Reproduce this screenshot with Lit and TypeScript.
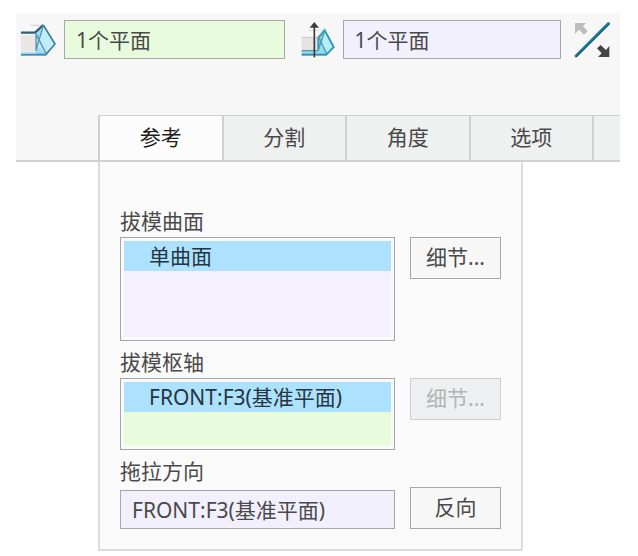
import { LitElement, html, css, svg } from "lit";
import { customElement, state } from "lit/decorators.js";

const surfaceIcon = svg`
  <svg class="icon" width="35" height="32" viewBox="63 75 105 96" aria-hidden="true">
    <path d="M90 79H130L105 101Z" fill="#fafafa" />
    <path d="M90 79H130" stroke="#cfd3d5" stroke-width="3" />
    <path d="M63 108H106V156H63Z" fill="#e9e6e4" />
    <path d="M63 158H106L112 163H63Z" fill="#b5e2f3" />
    <path d="M130 78L165 135L138 166H108V101Z" fill="#a0dcf5" />
    <path d="M130 78L110 138L138 166L165 135Z" fill="#c0ecfb" />
    <path d="M63 101H105L130 78" fill="none" stroke="#2d6079" stroke-width="7" />
    <path d="M130 78L165 135L138 166" fill="none" stroke="#3f7f9b" stroke-width="5" />
    <path d="M108 103V157M130 80L109 150M109 106L138 164" fill="none" stroke="#5b93aa" stroke-width="4" />
    <path d="M63 167H139" stroke="#3b8db0" stroke-width="6" />
  </svg>`;

const hingeIcon = svg`
  <svg class="icon" width="37" height="37" viewBox="81 66 111 111" aria-hidden="true">
    <path d="M112 94H160" stroke="#d8dadb" stroke-width="3" />
    <path d="M92 114H142V154H92Z" fill="#e6e2e0" />
    <path d="M92 115H140" stroke="#c9cccd" stroke-width="3" />
    <path d="M92 155H140L160 166H92Z" fill="#98d9ec" />
    <path d="M161 94L188 144L167 167H142V116Z" fill="#8fdcf0" />
    <path d="M161 94L152 138L167 164L187 144Z" fill="#b5effb" />
    <path d="M142 154V116L161 94L188 144L167 166" fill="none" stroke="#389bb6" stroke-width="6" />
    <path d="M161 96L142 152M145 118L167 164" fill="none" stroke="#5399ad" stroke-width="4" />
    <path d="M92 155H142" stroke="#4c9db5" stroke-width="4" />
    <path d="M92 167H168" stroke="#3c8eaa" stroke-width="6" />
    <path d="M130 80V175" stroke="#3b3b3b" stroke-width="5" />
    <path d="M130 69L144 86H116Z" fill="#3b3b3b" />
  </svg>`;

const flipIcon = svg`
  <svg class="icon" width="36" height="37" viewBox="192 66 108 111" aria-hidden="true">
    <path d="M195 72H228L219 81L233 96L222 107L207 92L195 105Z" fill="#bdbdbd" />
    <path d="M298 174H264L275 163L261 148L272 138L288 153L298 141Z" fill="#454545" />
    <path d="M198 171L295 74" stroke="#2387a6" stroke-width="9" stroke-linecap="round" />
    <path d="M200 172L297 75" stroke="#27566b" stroke-width="4" stroke-linecap="round" />
  </svg>`;

@customElement("app-root")
export class AppRoot extends LitElement {
  @state() private activeTab = "参考";

  private readonly tabs = ["参考", "分割", "角度", "选项"];

  static styles = css`
    :host {
      display: block;
      padding: 13px 18px 5px 16px;
      background: #fff;
      color: #4a4a4a;
      font: 21px/32px "Noto Sans", "Noto Sans CJK SC", sans-serif;
    }
    * {
      box-sizing: border-box;
    }
    button,
    input {
      margin: 0;
      font: inherit;
      color: inherit;
      border-radius: 0;
    }
    .head {
      background: #f7f7f7;
    }
    .toolbar {
      display: flex;
      align-items: center;
      gap: 13px;
      height: 102px;
      padding: 7px 10px 56px 5px;
    }
    .icon {
      display: block;
      flex: none;
    }
    .collector {
      display: flex;
      flex: 1;
      align-items: center;
      gap: 8px;
      min-width: 0;
    }
    .field {
      width: 100%;
      min-width: 0;
      height: 39px;
      padding: 0 11px 2px;
      border: 1px solid #a6a6a6;
      background: #f3f0fe;
      outline: none;
    }
    .active {
      background: #e8fcdd;
    }
    .flip {
      flex: none;
      padding: 0;
      border: 0;
      background: none;
    }
    .tabs {
      display: grid;
      grid-template-columns: 82px repeat(4, 1fr) 28px;
      height: 47px;
      border-bottom: 2px solid #d0d0d0;
    }
    .tab {
      padding: 0 0 2px;
      border: 0 solid #d0d0d0;
      border-width: 1px 0 0 2px;
      background: #eff0f0;
    }
    .tab[aria-selected="true"] {
      background: #fcfcfc;
      color: #1c1c1c;
    }
    .first {
      grid-column: 2;
    }
    .panel {
      max-width: 425px;
      margin-left: 82px;
      padding: 43px 20px 20px;
      border: 2px solid #dcdcdc;
      border-top: 0;
      background: #fafafa;
    }
    .group {
      display: grid;
      grid-template-columns: 1fr 91px;
      column-gap: 15px;
      align-items: start;
    }
    .group + .group {
      margin-top: 5px;
    }
    .bottom {
      align-items: end;
    }
    .label {
      grid-column: 1 / -1;
    }
    .list {
      height: 104px;
      margin: 0;
      padding: 3px;
      border: 1px solid #a6a6a6;
      background: #f4f0fe content-box;
      list-style: none;
    }
    .short {
      height: 72px;
      background-color: #e8fcdd;
    }
    .option {
      padding-left: 25px;
      background: #ade2ff;
      color: #263540;
      line-height: 30px;
      white-space: nowrap;
      overflow: hidden;
    }
    .button {
      height: 42px;
      padding: 0 0 2px;
      border: 1px solid #a6a6a6;
      background: #f7f7f7;
    }
    .button:disabled {
      border-color: #cecece;
      background: #eeeff0;
      color: #b4b4b4;
    }
  `;

  render() {
    return html`
      <header class="head">
        <div class="toolbar">
          <label class="collector">
            ${surfaceIcon}
            <input class="field active" aria-label="拔模枢轴" readonly .value=${"1个平面"} />
          </label>
          <label class="collector">
            ${hingeIcon}
            <input class="field" aria-label="拖拉方向" readonly .value=${"1个平面"} />
          </label>
          <button class="flip" aria-label="反向">${flipIcon}</button>
        </div>
        <div class="tabs" role="tablist">
          ${this.tabs.map(
            (name, i) => html`<button
              class="tab ${i === 0 ? "first" : ""}"
              role="tab"
              aria-selected=${this.activeTab === name}
              @click=${() => (this.activeTab = name)}
            >${name}</button>`
          )}
          <div class="tab"></div>
        </div>
      </header>
      <main class="panel" role="tabpanel">
        <div class="group">
          <span class="label" id="surfaces">拔模曲面</span>
          <ul class="list" role="listbox" aria-labelledby="surfaces" tabindex="0">
            <li class="option" role="option" aria-selected="true">单曲面</li>
          </ul>
          <button class="button">细节...</button>
        </div>
        <div class="group">
          <span class="label" id="hinges">拔模枢轴</span>
          <ul class="list short" role="listbox" aria-labelledby="hinges" tabindex="0">
            <li class="option" role="option" aria-selected="true">FRONT:F3(基准平面)</li>
          </ul>
          <button class="button" disabled>细节...</button>
        </div>
        <div class="group bottom">
          <label class="label" for="direction">拖拉方向</label>
          <input class="field" id="direction" readonly .value=${"FRONT:F3(基准平面)"} />
          <button class="button">反向</button>
        </div>
      </main>
    `;
  }
}
